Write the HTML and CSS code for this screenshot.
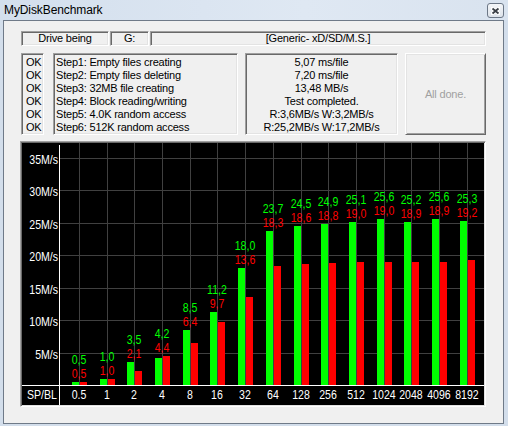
FILE: index.html
```html
<!DOCTYPE html>
<html lang="en">
<head>
	<meta charset="UTF-8">
	<title>MyDiskBenchmark</title>
	<link rel="stylesheet" href="styles.css">
</head>
<body>
	<div class="window">
		<div class="titlebar">
			<span class="title">MyDiskBenchmark</span>
			<div class="close">
				<svg width="9" height="8" viewBox="0 0 9 8">
					<path d="M1.5 1.5L7.5 6.5M7.5 1.5L1.5 6.5" stroke="#fff" stroke-width="3.6" stroke-linecap="square"/>
					<path d="M1.5 1.5L7.5 6.5M7.5 1.5L1.5 6.5" stroke="#3a3f46" stroke-width="1.8"/>
				</svg>
			</div>
		</div>
		<div class="client">
			<div class="drive-row">
				<div class="box drive-label">Drive being</div>
				<div class="box drive-letter">G:</div>
				<div class="box drive-name">[Generic- xD/SD/M.S.]</div>
			</div>
			<div class="steps-row">
				<div class="box status">
					<div>OK</div><div>OK</div><div>OK</div><div>OK</div><div>OK</div><div>OK</div>
				</div>
				<div class="box steps">
					<div>Step1: Empty files creating</div>
					<div>Step2: Empty files deleting</div>
					<div>Step3: 32MB file creating</div>
					<div>Step4: Block reading/writing</div>
					<div>Step5: 4.0K random access</div>
					<div>Step6: 512K random access</div>
				</div>
				<div class="box results">
					<div>5,07 ms/file</div>
					<div>7,20 ms/file</div>
					<div>13,48 MB/s</div>
					<div>Test completed.</div>
					<div>R:3,6MB/s W:3,2MB/s</div>
					<div>R:25,2MB/s W:17,2MB/s</div>
				</div>
				<div class="done-btn">All done.</div>
			</div>
			<div class="chart">
				<svg width="462" height="262" viewBox="0 0 462 262" shape-rendering="crispEdges">
					<path class="grid" d="M57.5 0V242M85.5 0V242M112.5 0V242M140.5 0V242M168.5 0V242M195.5 0V242M223.5 0V242M251.5 0V242M279.5 0V242M306.5 0V242M334.5 0V242M362.5 0V242M389.5 0V242M417.5 0V242M445.5 0V242"/>
					<path class="grid" d="M38 15.5H462M38 47.5H462M38 80.5H462M38 112.5H462M38 145.5H462M38 177.5H462M38 210.5H462"/>
					<path class="axis" d="M37.5 2V262M0 242.5H462"/>

					<g class="bars-w">
						<rect x="50" y="239" width="7" height="3"/>
						<rect x="78" y="236" width="7" height="6"/>
						<rect x="105" y="219" width="7" height="23"/>
						<rect x="133" y="215" width="7" height="27"/>
						<rect x="161" y="187" width="7" height="55"/>
						<rect x="188" y="169" width="7" height="73"/>
						<rect x="216" y="125" width="7" height="117"/>
						<rect x="244" y="88" width="7" height="154"/>
						<rect x="272" y="83" width="7" height="159"/>
						<rect x="299" y="81" width="7" height="161"/>
						<rect x="327" y="79" width="7" height="163"/>
						<rect x="355" y="76" width="7" height="166"/>
						<rect x="382" y="79" width="7" height="163"/>
						<rect x="410" y="76" width="7" height="166"/>
						<rect x="438" y="78" width="7" height="164"/>
					</g>
					<g class="bars-r">
						<rect x="58" y="239" width="7" height="3"/>
						<rect x="86" y="236" width="7" height="6"/>
						<rect x="113" y="228" width="7" height="14"/>
						<rect x="141" y="213" width="7" height="29"/>
						<rect x="169" y="200" width="7" height="42"/>
						<rect x="196" y="179" width="7" height="63"/>
						<rect x="224" y="154" width="7" height="88"/>
						<rect x="252" y="123" width="7" height="119"/>
						<rect x="280" y="121" width="7" height="121"/>
						<rect x="307" y="120" width="7" height="122"/>
						<rect x="335" y="119" width="7" height="123"/>
						<rect x="363" y="119" width="7" height="123"/>
						<rect x="390" y="119" width="7" height="123"/>
						<rect x="418" y="119" width="7" height="123"/>
						<rect x="446" y="117" width="7" height="125"/>
					</g>

					<g class="val-w">
						<text x="57" y="221">0,5</text>
						<text x="85" y="218">1,0</text>
						<text x="112" y="201">3,5</text>
						<text x="140" y="195">4,2</text>
						<text x="168" y="169">8,5</text>
						<text x="195" y="151">11,2</text>
						<text x="223" y="107">18,0</text>
						<text x="251" y="70">23,7</text>
						<text x="279" y="65">24,5</text>
						<text x="306" y="63">24,9</text>
						<text x="334" y="61">25,1</text>
						<text x="362" y="58">25,6</text>
						<text x="389" y="61">25,2</text>
						<text x="417" y="58">25,6</text>
						<text x="445" y="60">25,3</text>
					</g>
					<g class="val-r">
						<text x="57" y="235">0,5</text>
						<text x="85" y="232">1,0</text>
						<text x="112" y="215">2,1</text>
						<text x="140" y="209">4,4</text>
						<text x="168" y="183">6,4</text>
						<text x="195" y="165">9,7</text>
						<text x="223" y="121">13,6</text>
						<text x="251" y="84">18,3</text>
						<text x="279" y="79">18,6</text>
						<text x="306" y="77">18,8</text>
						<text x="334" y="75">19,0</text>
						<text x="362" y="72">19,0</text>
						<text x="389" y="75">18,9</text>
						<text x="417" y="72">18,9</text>
						<text x="445" y="74">19,2</text>
					</g>

					<g class="ylab">
						<text x="36" y="21">35M/s</text>
						<text x="36" y="53">30M/s</text>
						<text x="36" y="86">25M/s</text>
						<text x="36" y="118">20M/s</text>
						<text x="36" y="151">15M/s</text>
						<text x="36" y="183">10M/s</text>
						<text x="36" y="216">5M/s</text>
					</g>
					<g class="xlab">
						<text x="20" y="256">SP/BL</text>
						<text x="57" y="256">0.5</text>
						<text x="85" y="256">1</text>
						<text x="112" y="256">2</text>
						<text x="140" y="256">4</text>
						<text x="168" y="256">8</text>
						<text x="195" y="256">16</text>
						<text x="223" y="256">32</text>
						<text x="251" y="256">64</text>
						<text x="279" y="256">128</text>
						<text x="306" y="256">256</text>
						<text x="334" y="256">512</text>
						<text x="362" y="256">1024</text>
						<text x="389" y="256">2048</text>
						<text x="417" y="256">4096</text>
						<text x="445" y="256">8192</text>
					</g>
				</svg>
			</div>
		</div>
	</div>
</body>
</html>
```

FILE: styles.css
```css
body {
	margin: 0;
	font-family: "Liberation Sans", Arial, sans-serif;
	font-size: 11px;
	color: #000;
	background: #d3deeb;
}

.window {
	width: 508px;
	height: 426px;
	background: #d3deeb;
}

.titlebar {
	display: flex;
	height: 20px;
	padding-left: 4px;
	background: linear-gradient(to right, #d3dfed, #dfe8f3 60%, #d9e3ef);
}

.title {
	font-size: 12px;
	line-height: 20px;
	letter-spacing: -0.1px;
}

.close {
	box-sizing: border-box;
	width: 17px;
	height: 15px;
	margin: 3px 4px 0 auto;
	border: 1px solid #6c7786;
	border-radius: 3px;
	background: linear-gradient(#f4f6f9, #dde3ea);
	display: flex;
	justify-content: center;
	align-items: center;
}

.close svg {
	display: block;
}

.client {
	box-sizing: border-box;
	width: 501px;
	height: 404px;
	margin-left: 3px;
	padding: 10px 0 0 17px;
	border: 1px solid #6f7a88;
	background: #f0f0f0;
	letter-spacing: -0.2px;
}

.box {
	box-sizing: border-box;
	border: 1px solid;
	border-color: #a0a0a0 #fff #fff #a0a0a0;
	box-shadow: inset 1px 1px 0 #696969, inset -1px -1px 0 #e3e3e3;
	overflow: hidden;
	white-space: nowrap;
}

.drive-row {
	display: flex;
	gap: 1px;
	height: 15px;
}

.drive-row .box {
	line-height: 13px;
	text-align: center;
}

.drive-label { width: 88px; }
.drive-letter { width: 39px; }
.drive-name { width: 336px; }

.steps-row {
	display: flex;
	height: 82px;
	margin-top: 7px;
	line-height: 13px;
}

.status {
	width: 23px;
	padding: 2px 0 0 4px;
}

.steps {
	width: 185px;
	margin-left: 9px;
	padding: 2px 0 0 2px;
}

.results {
	width: 153px;
	margin-left: 7px;
	padding-top: 2px;
	text-align: center;
}

.done-btn {
	box-sizing: border-box;
	width: 81px;
	margin-left: 7px;
	border: 1px solid;
	border-color: #fff #696969 #696969 #fff;
	box-shadow: inset 1px 1px 0 #e3e3e3, inset -1px -1px 0 #a0a0a0;
	display: flex;
	justify-content: center;
	align-items: center;
	color: #a0a0a0;
}

.chart {
	box-sizing: border-box;
	width: 466px;
	height: 266px;
	margin: 6px 0 0 -1px;
	border: 1px solid;
	border-color: #a0a0a0 #fff #fff #a0a0a0;
	box-shadow: inset 1px 1px 0 #696969, inset -1px -1px 0 #e3e3e3;
	padding: 1px;
}

.chart svg {
	display: block;
	background: #000;
}

.grid {
	stroke: #404040;
	fill: none;
}

.axis {
	stroke: #fff;
	fill: none;
}

.bars-w { fill: #00ff00; }
.bars-r { fill: #ff0000; }

.chart text {
	font-family: "Liberation Sans", Arial, sans-serif;
	font-size: 12px;
	letter-spacing: 0;
	text-anchor: middle;
	transform: scaleX(0.88);
	transform-box: fill-box;
	transform-origin: center;
}

.val-w text { fill: #00ff00; }
.val-r text { fill: #ff0000; }
.xlab text { fill: #fff; }

.ylab text {
	fill: #fff;
	text-anchor: end;
	transform-origin: right;
}
```
